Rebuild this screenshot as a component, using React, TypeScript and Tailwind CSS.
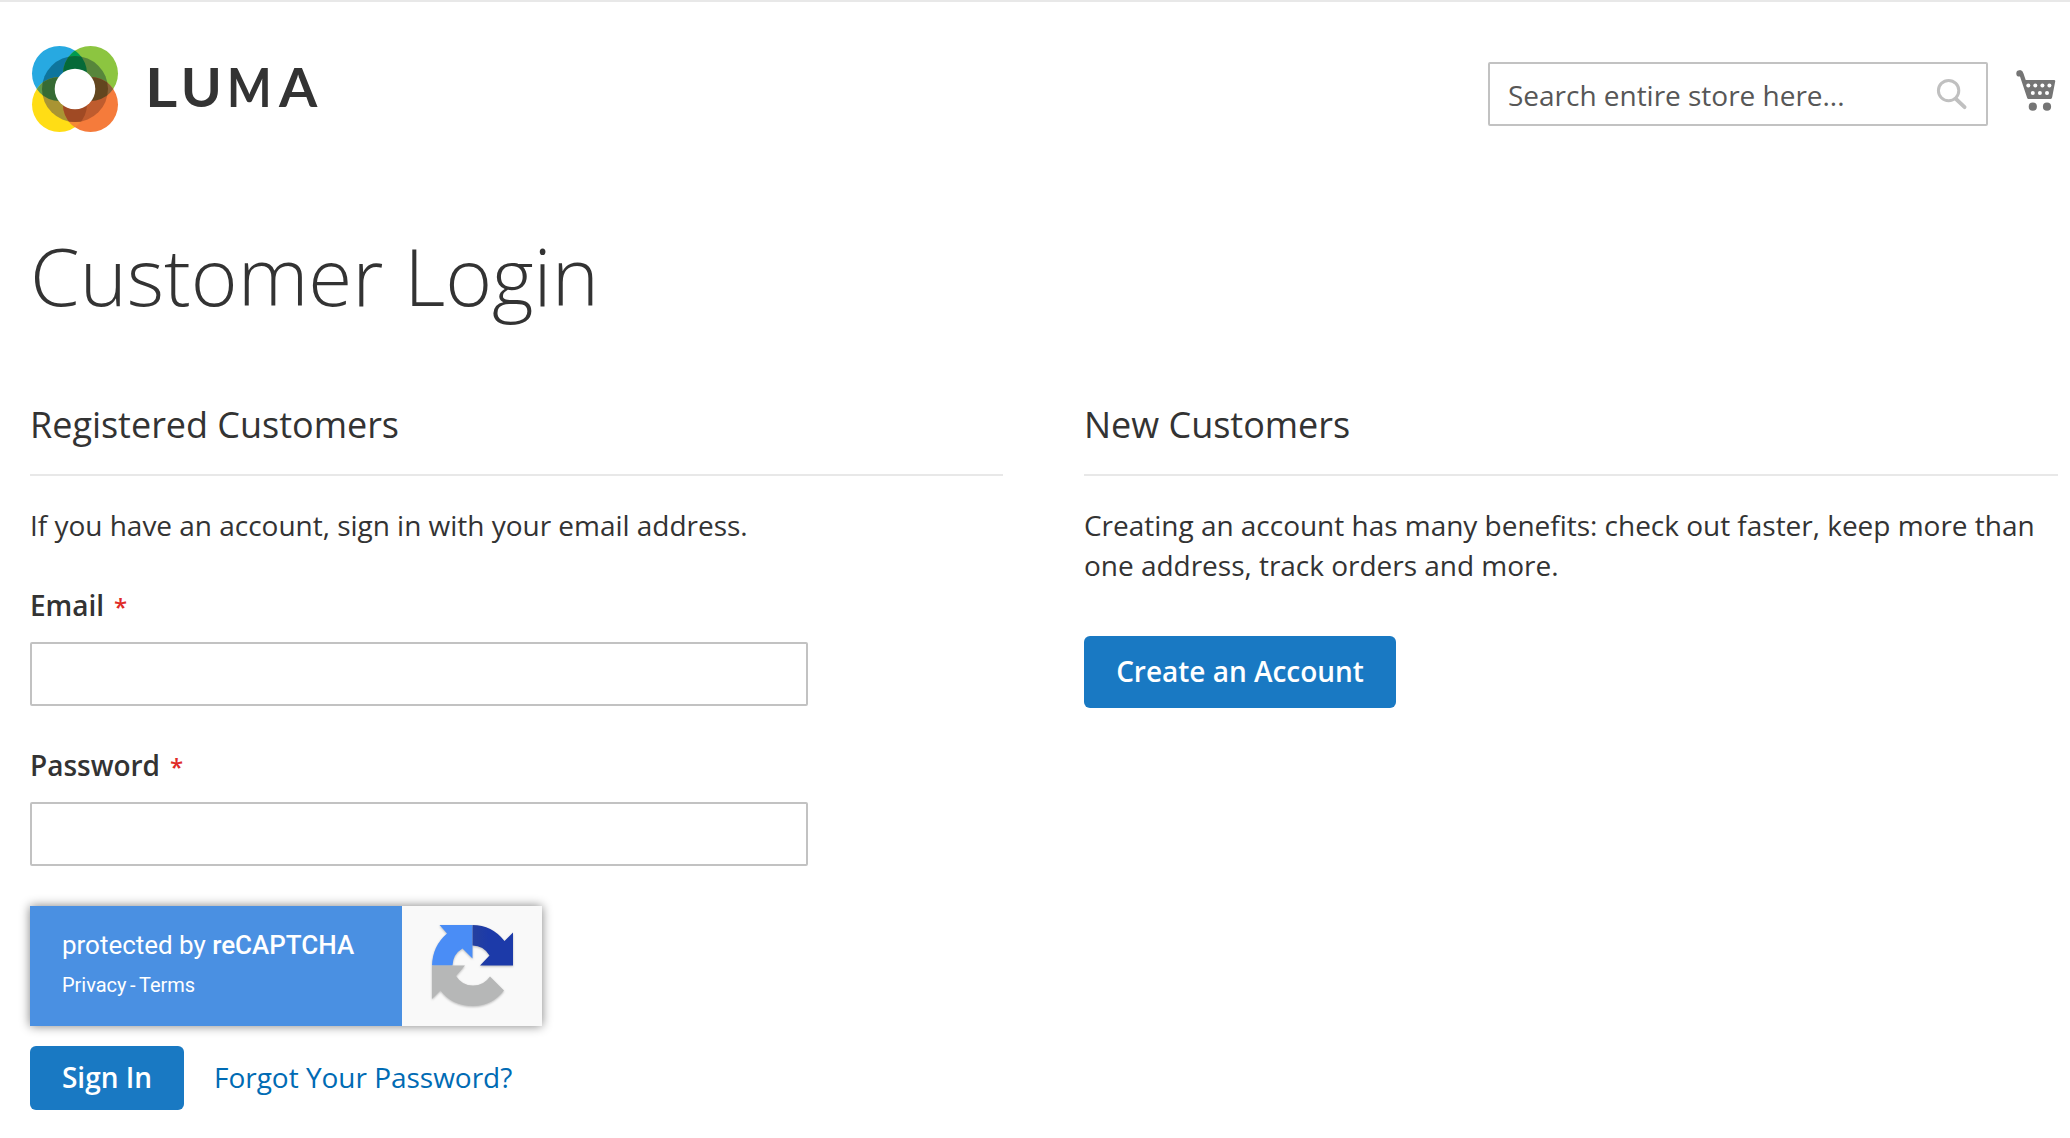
import React from "react";

function LumaLogo() {
  return (
    <svg width="300" height="100" viewBox="0 0 300 100" role="img" aria-label="LUMA">
      <defs>
        <clipPath id="tl"><circle cx="29.5" cy="33.5" r="27.5" /></clipPath>
        <clipPath id="tr"><circle cx="60.5" cy="33.5" r="27.5" /></clipPath>
        <clipPath id="bl"><circle cx="29.5" cy="64.5" r="27.5" /></clipPath>
        <clipPath id="br"><circle cx="60.5" cy="64.5" r="27.5" /></clipPath>
      </defs>
      <circle cx="29.5" cy="33.5" r="27.5" fill="#27a9e1" />
      <circle cx="60.5" cy="33.5" r="27.5" fill="#8cc540" />
      <circle cx="29.5" cy="64.5" r="27.5" fill="#ffdd15" />
      <circle cx="60.5" cy="64.5" r="27.5" fill="#f57b3b" />
      <circle cx="29.5" cy="33.5" r="27.5" fill="#009a50" clipPath="url(#tr)" />
      <circle cx="29.5" cy="64.5" r="27.5" fill="#5f994c" clipPath="url(#tl)" />
      <circle cx="60.5" cy="64.5" r="27.5" fill="#8a6238" clipPath="url(#tr)" />
      <circle cx="60.5" cy="64.5" r="27.5" fill="#f58a35" clipPath="url(#bl)" />
      <circle cx="45" cy="49" r="33" fill="#0e759d" clipPath="url(#tl)" />
      <circle cx="45" cy="49" r="33" fill="#57863b" clipPath="url(#tr)" />
      <circle cx="45" cy="49" r="33" fill="#a99433" clipPath="url(#bl)" />
      <circle cx="45" cy="49" r="33" fill="#bf5c2e" clipPath="url(#br)" />
      <g clipPath="url(#tl)"><circle cx="45" cy="49" r="33" fill="#056a38" clipPath="url(#tr)" /></g>
      <g clipPath="url(#tl)"><circle cx="45" cy="49" r="33" fill="#366b34" clipPath="url(#bl)" /></g>
      <g clipPath="url(#br)"><circle cx="45" cy="49" r="33" fill="#63461f" clipPath="url(#tr)" /></g>
      <g clipPath="url(#br)"><circle cx="45" cy="49" r="33" fill="#a04a24" clipPath="url(#bl)" /></g>
      <circle cx="45" cy="49" r="20.3" fill="#fff" />
      <g fontFamily="Lato, sans-serif" fontWeight="700" fontSize="53" fill="#333">
        <text transform="translate(114.9 67) scale(1.17 1)">L</text>
        <text transform="translate(150.8 67) scale(1.045 1)">U</text>
        <text transform="translate(197.1 67) scale(.89 1)">M</text>
        <text transform="translate(249 67) scale(1.04 1)">A</text>
      </g>
    </svg>
  );
}

function SearchIcon() {
  return (
    <svg width="32" height="32" viewBox="0 0 32 32" fill="none" stroke="#c0c0c0">
      <circle cx="12.6" cy="12.6" r="10.2" strokeWidth="3" />
      <path d="M20 21 L28.6 29.2" strokeWidth="3.8" strokeLinecap="round" />
    </svg>
  );
}

function CartIcon() {
  return (
    <svg width="42" height="42" viewBox="0 0 42 42" fill="#757575">
      <circle cx="3.5" cy="3.4" r="3.2" />
      <path d="M3.500 .2 Q6.500 .3 7.500 3.500 L9.700 9.900 H38 Q39.500 9.900 39.200 11.400 L36.200 27 Q36 29 34.500 29 H12.500 Q11.500 29 11.200 28 L4 6.600 Z" />
      <circle cx="16.800" cy="36.700" r="4.100" />
      <circle cx="31" cy="36.700" r="4.100" />
      <g fill="#fff">
        <circle cx="12.300" cy="15.600" r="2" /><circle cx="19.300" cy="15.600" r="2" /><circle cx="26.400" cy="15.600" r="2" /><circle cx="33.400" cy="15.600" r="2" />
        <circle cx="16.800" cy="23" r="2" /><circle cx="23.900" cy="23" r="2" /><circle cx="31" cy="23" r="2" />
      </g>
    </svg>
  );
}

function RecaptchaMark() {
  return (
    <svg width="84" height="86" viewBox="0 0 84 86" className="drop-shadow-[0_1px_1px_rgba(0,0,0,0.25)]">
      <defs>
        <linearGradient id="navy" x1="0" x2="1"><stop offset="0" stopColor="#25409f" /><stop offset=".4" stopColor="#1c3aa9" /></linearGradient>
      </defs>
      <path d="M8.5 1 H41.5 V34.5 L31.5 24.5 Q22 30 21.5 41.5 H1 Q1.5 22 16 9.5 Z" fill="#4a8df6" />
      <path d="M41.5 1 Q61 1 73.5 17 L82 8.5 V41.5 H49 L58.5 31.5 Q52.5 21.5 41.5 21.5 Z" fill="url(#navy)" />
      <path d="M1 41.5 H34 L25 52 Q31 61.5 42 61.5 Q53 61.5 59 52.5 L73 66.5 Q61 82 42 82 Q21 82 9.5 66.5 L1 75 Z" fill="#b6b7b7" />
    </svg>
  );
}

function Field({ label, type, className }: { label: string; type: string; className: string }) {
  return (
    <label className={`block ${className}`}>
      <span className="block h-10 font-semibold">
        {label}
        <span className="ml-[10px] text-2xl leading-none font-semibold text-[#e02b27]">*</span>
      </span>
      <input
        type={type}
        className="mt-[17px] block h-16 w-[778px] rounded-[2px] border-2 border-[#c2c2c2] bg-white px-[18px] outline-none"
      />
    </label>
  );
}

function SectionTitle({ children }: { children: React.ReactNode }) {
  return (
    <h2 className="h-[76px] border-b-2 border-[#e8e8e8] text-4xl leading-[50px]">{children}</h2>
  );
}

export default function App() {
  return (
    <div className="h-[1138px] overflow-hidden border-t-2 border-[#e8e8e8] bg-white font-['Open_Sans',sans-serif] text-[28px] leading-10 tracking-[-0.02px] text-[#333]">
      <header className="flex h-[228px] items-start justify-between pr-[12px] pl-[30px]">
        <a className="mt-[38px]"><LumaLogo /></a>
        <div className="flex items-start">
          <div className="mt-[60px] flex h-16 w-[500px] items-center justify-between rounded-[2px] border-2 border-[#c2c2c2] pr-[18px] pl-[18px]">
            <input className="w-[400px] pt-[2px] outline-none placeholder:text-[#575757] placeholder:opacity-100" placeholder="Search entire store here..." />
            <SearchIcon />
          </div>
          <a className="mt-[68px] ml-[28px]"><CartIcon /></a>
        </div>
      </header>
      <main className="pr-[12px] pl-[30px]">
        <h1 className="h-[170px] text-[80px] leading-[90px] font-light">Customer Login</h1>
        <div className="flex justify-between">
          <section className="w-[973px]">
            <SectionTitle>Registered Customers</SectionTitle>
            <p className="mt-[29px]">If you have an account, sign in with your email address.</p>
            <Field label="Email" type="email" className="mt-10" />
            <Field label="Password" type="password" className="mt-[39px]" />
            <div className="mt-10 flex h-[120px] w-[512px] font-[Roboto,sans-serif] shadow-[0_0_10px_gray]">
              <div className="flex w-[372px] flex-col bg-[#4a90e2] pt-[19px] pl-8 text-white">
                <p className="text-[26px] leading-10">protected by <strong className="font-medium">reCAPTCHA</strong></p>
                <p className="text-[20px] leading-10">Privacy<span className="mx-[3.5px]">-</span>Terms</p>
              </div>
              <div className="flex-1 bg-[#f9f9f9] pt-[18px] pl-[29px]"><RecaptchaMark /></div>
            </div>
            <div className="mt-5 flex items-center gap-[30px]">
              <button className="h-16 w-[154px] rounded-[6px] bg-[#1979c3] pb-[2px] font-semibold text-white">Sign In</button>
              <a className="pb-[2px] text-[#006bb4]">Forgot Your Password?</a>
            </div>
          </section>
          <section className="w-[974px]">
            <SectionTitle>New Customers</SectionTitle>
            <p className="mt-[29px]">Creating an account has many benefits: check out faster, keep more than one address, track orders and more.</p>
            <button className="mt-[51px] h-[72px] w-[312px] rounded-[6px] bg-[#1979c3] pb-[2px] font-semibold text-white">Create an Account</button>
          </section>
        </div>
      </main>
    </div>
  );
}
